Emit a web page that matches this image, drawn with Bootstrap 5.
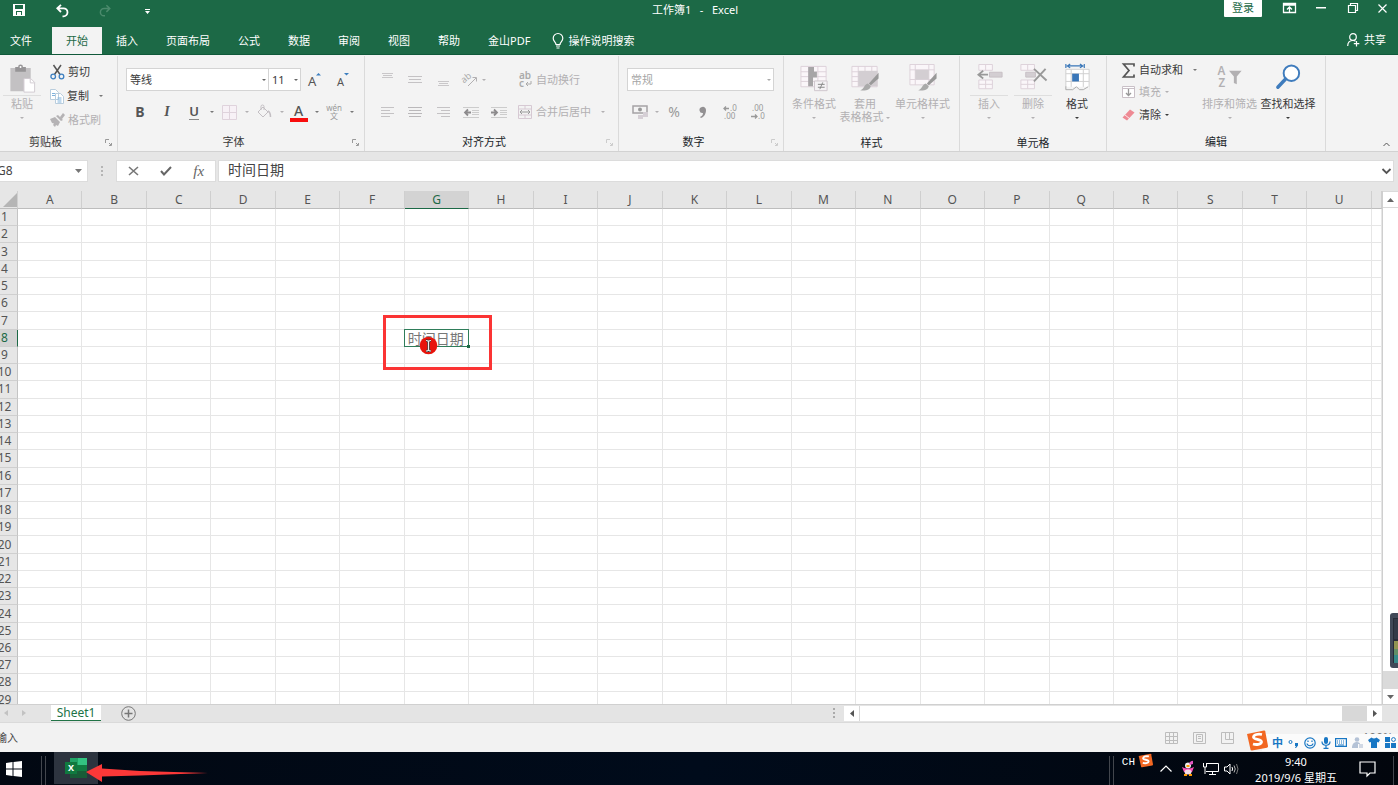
<!DOCTYPE html>
<html lang="zh-CN">
<head>
<meta charset="utf-8">
<meta name="viewport" content="width=device-width, initial-scale=1">
<title>工作簿1 - Excel</title>
<link href="https://cdn.jsdelivr.net/npm/bootstrap@5.3.0/dist/css/bootstrap.min.css" rel="stylesheet">
<script src="https://cdn.jsdelivr.net/npm/bootstrap@5.3.0/dist/js/bootstrap.bundle.min.js"></script>
<style>
:root{--xl:#1c6946;--ink:#3a3a3a;--off:#b2b0b2;--line:#dadada}
body{font-family:"Noto Sans","Noto Sans CJK SC",sans-serif;font-size:11px;line-height:14px;color:var(--ink);background:#e6e6e6}
svg{display:block;flex:none;overflow:visible}
button{font-size:11px;line-height:14px;color:inherit;white-space:nowrap}
.flat{background:none;border:0;padding:0;display:flex;align-items:center;justify-content:center}
.off{color:var(--off)}
.side{flex:1 0 0}
/* title and tabs */
.titlebar{background:var(--xl);color:#fff;height:27px}
.titlebar .flat{height:20px}
.titlebar .caption-text{padding:3px 8px 0 0}
.titlebar .flat.win{height:16px}
.signin{background:#fff;color:var(--xl);height:17px;width:38px;border:0;border-radius:0 0 1px 1px;padding:0 0 2px}
.tabbar{background:var(--xl);height:28px;color:#fff;border-bottom:1px solid #10593a}
.tabbar .nav-link{color:#fff;padding:7px 14px 6px;border-radius:0}
.tabbar .nav-link.active{background:#f3f3f3;color:var(--xl);margin-bottom:-1px}
.tabbar .file-tab{padding-left:10px;padding-right:20px}
.share{margin-right:12px;height:25px}
/* ribbon */
.ribbon{background:#f3f3f3;border-bottom:1px solid #d2d2d2;height:97px}
.rgroup{display:flex;flex-direction:column;border-right:1px solid var(--line);margin-top:1px;flex:none}
.rbody{height:79px}
.rlabel{display:flex;align-items:center;height:18px;text-align:center}
.rlabel span{flex:1}
.rlabel svg{margin-right:5px;margin-left:3px}
.rlabel .far{margin-left:14px}
.w-clip{width:118px}.w-font{width:247px}.w-align{width:254px}.w-num{width:165px}.w-style{width:176px}.w-cell{width:147px}.w-edit{width:219px}
.tool{width:26px;height:24px}
.tool-wide{width:28px;height:24px}
.line1{height:24px;margin-top:12px;display:flex}
.line2{height:24px;margin-top:8px;display:flex;align-items:center}
.car{width:7px;height:24px;color:#777}
.car.off,.off .car{color:var(--off)}
.car::before,.tri{content:"";border:2px solid transparent;border-top-color:currentColor;border-bottom:0;display:block}
.form-select.combo{font-size:11px;line-height:14px;padding:0 10px 0 3px;height:23px;border:1px solid #d4d4d4;border-radius:0;color:var(--ink);background-color:#fff;background-size:4px 2px;background-position:right 2px center;
--bs-form-select-bg-img:url("data:image/svg+xml,%3Csvg xmlns='http://www.w3.org/2000/svg' viewBox='0 0 4 2'%3E%3Cpath d='M0 0h4L2 2z' fill='%23666'/%3E%3C/svg%3E")}
.form-select.combo.off{color:#a5a5a5;--bs-form-select-bg-img:url("data:image/svg+xml,%3Csvg xmlns='http://www.w3.org/2000/svg' viewBox='0 0 4 2'%3E%3Cpath d='M0 0h4L2 2z' fill='%23aaa'/%3E%3C/svg%3E")}
.big{flex-direction:column;justify-content:flex-start;height:70px}
.big svg{height:31px}
.big .cap{border-top:1px solid transparent;padding-top:1px;line-height:13px}
.big .cap.ruled{border-top-color:#dedede;padding-left:8px;padding-right:8px}
.big .tri{margin-top:7px}
.small-cmd{height:24px;justify-content:flex-start;gap:3px}
.small-cmd.tight{height:22px}
.bi-b{font-size:14px;font-weight:700;color:#555}
.bi-i{font:italic bold 14px "Liberation Serif",serif;color:#555}
.bi-u{font:600 13px/15px "Noto Sans",sans-serif;color:#555;border-bottom:1px solid #888}
.pinyin{font-size:8px;line-height:8px;color:#999}
.wrap-ic{margin-left:28px}
.merge-ic{margin-left:5px}
/* formula bar */
.fbar{height:39px;padding-top:8px}
.fbox{height:22px;background:#fff;border:1px solid #dcdcdc}
.fbox input{border:0;outline:0;background:none;padding:0;color:#444}
.fbox .name-in{width:78px;font-size:12px;margin-left:-3px}
.fbox .formula-in{font-size:14px;line-height:18px;padding:0 0 2px 9px}
.fx{font:italic 15px "Liberation Serif",serif;color:#666}
.fmain{margin:0 4px 0 2px}
/* sheet */
.sheet{min-height:0}
.cells-wrap{min-width:0;overflow:hidden;border-right:1px solid #cfcfcf;background:#fff}
.cells{table-layout:fixed;width:100%;height:calc(100% + 5px);border-collapse:separate;border-spacing:0;font-size:12px;line-height:16px}
.cells th,.cells td{padding:0;font-weight:400}
.cells thead th{height:18px;padding-top:1px;background:#e6e6e6;text-align:center;color:#555;border-right:1px solid #cfcfcf;border-bottom:1px solid #bdbdbd}
.cells tbody th{background:#e6e6e6;color:#555;border-right:1px solid #c4c4c4;border-bottom:1px solid #cfcfcf}
.cells tbody th span{display:flex;justify-content:center;width:9px;height:16px}
.cells td{border-right:1px solid #e6e6e6;border-bottom:1px solid #e6e6e6}
.cells thead th.hot{background:#d3d3d3;border-bottom-color:var(--xl);color:var(--xl)}
.cells tbody th.hot{background:#d3d3d3;border-right-color:var(--xl);color:var(--xl)}
.cells td.editing{position:relative;z-index:1}
.corner{width:18px}.stub{width:10px}
.corner svg{margin-left:3px}
.cell-edit{position:absolute;left:-1px;top:-1px;width:calc(100% + 2px);height:calc(100% + 2px);border:1px solid #2f7d5a;border-radius:0;padding:0 0 0 3px;font-size:14px;line-height:16px;color:#777;background:#fff;outline:0}
.fill-dot{position:absolute;right:-2px;bottom:-2px;width:3px;height:3px;background:#1c6946}
.callout-frame{position:absolute;inset:-15px -24px -24px -22px;border:3px solid #fb3434}
.pointer{position:absolute;left:14px;top:6px}
.vscroll{width:15px;background:#dadada}
.sbtn{background:#fff;width:15px;height:15px}
.vscroll .sbtn:first-child{margin:1px 0}
.vthumb{background:#fff;flex:1;margin-bottom:18px}
.meter{position:absolute;right:0;bottom:36px;z-index:2;overflow:hidden}
.sheetbar{height:18px;background:#e4e4e4;border-top:1px solid #d0d0d0}
.sheet-tab{width:50px;height:16px;line-height:15px;background:#fff;color:#217346;border-bottom:1px solid #217346;font-size:12px;text-align:center;text-decoration:none}
.new-tab{margin-left:20px}
.hscroll{width:538px;height:15px;background:#d8d8d8;gap:1px;margin:1px 16px 0 0}
.hthumb{background:#fff;flex:1;margin-right:24px}
.statusbar{height:30px;background:#f2f2f2;border-top:1px solid #dadada;color:#444}
.statusbar .mode{margin-left:-4px}
.view-btn{width:28px}
.zoomtext{font-size:12px;margin:0 5px 0 121px;color:#777}
.ime{position:absolute;right:0;bottom:1px;height:17px;width:136px;background:#fbfbfb;padding-left:10px;padding-right:2px}
.ime-logo{position:absolute;left:-16px;top:-4px}
.ime .zh{color:#1877c4;font-weight:700}
.taskbar{height:33px;background:linear-gradient(90deg,#020812,#000b1b 50%,#02060d)}
.taskbar,.taskbar button{color:#fff}
.bars{width:5px;height:29px;border-left:1px solid #42464d;border-right:1px solid #42464d}
.bars.first{margin-left:14px;margin-right:8px}
.start{width:27px}
.app{width:44px;height:32px;background:#2d343f}
.arrow{position:absolute;left:32px;top:12px}
.clock{width:90px;line-height:16px;text-align:center;margin-left:7px;padding-top:2px}
.ch{font-family:"Liberation Mono",monospace;margin:3px 3px 0 8px}
.tray-s{margin-top:1px}
</style>
</head>
<body class="vh-100 d-flex flex-column overflow-hidden">

<header class="titlebar d-flex align-items-start flex-shrink-0">
  <div class="d-flex side">
    <button class="flat ms-2" style="width:22px" aria-label="保存"><svg width="12" height="12" viewBox="0 0 12 12"><path d="M0 0h12v12H0zM2 1v4h8V1zM3 7v4h1V8h4v3h1V7z" fill="#fff" fill-rule="evenodd"/><path d="M5 9h1.500v2H5z" fill="#fff"/></svg></button>
    <button class="flat" style="width:64px" aria-label="撤消"><svg width="13" height="13" viewBox="0 0 13 13" fill="none" stroke="#fff" stroke-width="1.800"><path d="M5 .8 1.300 4.300 5 8M1.500 4.300h6a4 4 0 0 1 0 8H6.500"/></svg></button>
    <button class="flat" style="width:22px" aria-label="恢复"><svg width="12" height="13" viewBox="0 0 13 13" fill="none" stroke="#4b8a6c" stroke-width="1.600"><path d="m8 .8 3.700 3.500L8 8m3.500-3.700h-6a4 4 0 0 0 0 8h1"/></svg></button>
    <button class="flat" style="width:62px;height:23px" aria-label="自定义快速访问工具栏"><svg width="5" height="5"><path d="M0 0h5v1H0zM0 2h5L2.500 5z" fill="#fff"/></svg></button>
  </div>
  <div class="caption-text">工作簿1&nbsp;&nbsp; -&nbsp;&nbsp; Excel</div>
  <div class="d-flex side justify-content-end">
    <button class="signin me-2">登录</button>
    <button class="flat win" style="width:38px" aria-label="功能区显示选项"><svg width="13" height="10" viewBox="0 0 13 10" fill="none" stroke="#fff"><path d="M.5.5h12v9H.5zM.5 2h12M6.500 9V4M4 6.500 6.500 4 9 6.500" stroke-width="1.300"/></svg></button>
    <button class="flat win" style="width:26px" aria-label="最小化"><svg width="10" height="2"><path d="M0 0h10v1.500H0z" fill="#fff"/></svg></button>
    <button class="flat win" style="width:37px" aria-label="向下还原"><svg width="10" height="10" viewBox="0 0 10 10" fill="none" stroke="#fff" stroke-width="1.200"><path d="M.5 2.500h7v7h-7zM2.500 2.500v-2h7v7h-2"/></svg></button>
    <button class="flat win me-1" style="width:23px" aria-label="关闭"><svg width="9" height="9" viewBox="0 0 9 9" stroke="#fff" stroke-width="1.200"><path d="m.5.5 8 8m0-8-8 8"/></svg></button>
  </div>
</header>

<nav class="tabbar d-flex flex-shrink-0">
  <ul class="nav flex-nowrap">
    <li><a class="nav-link file-tab" href="#">文件</a></li>
    <li><a class="nav-link active" href="#">开始</a></li>
    <li><a class="nav-link" href="#">插入</a></li>
    <li><a class="nav-link" href="#">页面布局</a></li>
    <li><a class="nav-link" href="#">公式</a></li>
    <li><a class="nav-link" href="#">数据</a></li>
    <li><a class="nav-link" href="#">审阅</a></li>
    <li><a class="nav-link" href="#">视图</a></li>
    <li><a class="nav-link" href="#">帮助</a></li>
    <li><a class="nav-link" href="#">金山PDF</a></li>
  </ul>
  <button class="flat ms-2 gap-1"><svg width="12" height="16" viewBox="0 0 12 16" fill="none" stroke="#fff" stroke-width="1.200"><path d="M4 11.500c0-2.500-2.800-3-2.800-6.200a4.800 4.800 0 0 1 9.600 0c0 3.200-2.800 3.700-2.800 6.200zM4 13h4M4.500 15h3"/></svg>操作说明搜索</button>
  <button class="flat share ms-auto gap-1"><svg width="13" height="14" viewBox="0 0 13 14" fill="none" stroke="#fff" stroke-width="1.200"><circle cx="6" cy="4" r="3.300"/><path d="M.7 13c0-3.500 2-5.500 5.300-5.500 1 0 1.800.2 2.500.7M9.500 8v5.500M6.800 10.700h5.500"/></svg>共享</button>
</nav>

<section class="ribbon d-flex flex-shrink-0" aria-label="开始">
  <div class="rgroup w-clip">
    <div class="rbody d-flex">
      <button class="flat big off pt-2" style="width:44px;margin-right:6px">
        <svg width="26" height="32" viewBox="0 0 26 32"><path d="M1 4h21v12h-6v12H1z" fill="#c3c1c3"/><path d="M6 3h3a2.500 2.500 0 0 1 5 0h3v5H6z" fill="#979597"/><circle cx="11.500" cy="3" r="1" fill="#fff"/><path d="M15 15h7l4 4v10H15z" fill="#fff" stroke="#d2cbd2"/><path d="M21.500 15v4.500H26" fill="none" stroke="#d2cbd2"/></svg>
        <span class="cap ruled">粘贴</span><span class="tri"></span></button>
      <div class="d-flex flex-column pt-1">
        <button class="flat small-cmd"><svg width="15" height="16" viewBox="0 0 15 16" fill="none"><path d="m3.500 1 6.500 9.500M11 1 4.500 10.500" stroke="#555" stroke-width="1.500"/><circle cx="3.200" cy="12.500" r="2.300" stroke="#3c7fc0" stroke-width="1.300"/><circle cx="11.500" cy="12.500" r="2.300" stroke="#3c7fc0" stroke-width="1.300"/></svg>剪切</button>
        <div class="d-flex"><button class="flat small-cmd"><svg width="14" height="15" viewBox="0 0 14 15" fill="#fff" stroke="#b9cddd"><path d="M.5.5h5l3 3v7h-8zM5.500 4.500h5l3 3v7h-8z"/><path d="M2 4.500h3M2 6.500h3M7.500 9h4M7.500 11h4M7.500 13h4" stroke="#7fb2dc"/></svg>复制</button><button class="flat car ms-2" aria-label="复制选项"></button></div>
        <button class="flat small-cmd off"><svg width="15" height="14" viewBox="0 0 15 14" fill="#b5b3b5"><path d="m10 4 3-4 2 2-3 4zM8 2l5 5-2 1-5-5zM0 6l5-2 5 5-2 4-2-1-1 2-2-2 1-1.500L2 10z"/></svg>格式刷</button>
      </div>
    </div>
    <div class="rlabel"><span>剪贴板</span><svg class="far" width="7" height="7" viewBox="0 0 7 7" stroke="#999" fill="none"><path d="M.5 4V.5H4M4 6.500h2.500V4M4 4l2 2"/></svg></div>
  </div>

  <div class="rgroup w-font">
    <div class="rbody">
      <div class="line1 ps-2">
        <select class="form-select combo" style="width:143px" aria-label="字体"><option>等线</option></select>
        <select class="form-select combo border-start-0" style="width:32px" aria-label="字号"><option>11</option></select>
        <button class="flat tool-wide" aria-label="增大字号"><svg width="14" height="17" viewBox="0 0 14 17"><text x="0" y="14" font-size="13" fill="#555">A</text><path d="M8 3.500h5L10.500 1z" fill="#3c7fc0"/></svg></button>
        <button class="flat tool-wide" aria-label="减小字号"><svg width="14" height="17" viewBox="0 0 14 17"><text x="1" y="14" font-size="11" fill="#555">A</text><path d="M8 1h5l-2.500 2.500z" fill="#3c7fc0"/></svg></button>
      </div>
      <div class="line2" style="gap:1px;padding-left:9px">
        <button class="flat tool bi-b" aria-label="加粗">B</button>
        <button class="flat tool bi-i" aria-label="倾斜">I</button>
        <button class="flat tool" aria-label="下划线"><span class="bi-u">U</span></button>
        <button class="flat car" aria-label="下划线选项"></button>
        <button class="flat tool" aria-label="边框"><svg width="15" height="15" viewBox="0 0 15 15" fill="#f7f1f6" stroke="#dfd3dc"><path d="M.5.5h14v14H.5zM7.500.5v14M.5 7.500h14"/></svg></button>
        <button class="flat car off" aria-label="边框选项"></button>
        <button class="flat tool" aria-label="填充颜色"><svg width="15" height="14" viewBox="0 0 15 14" fill="none" stroke="#c3bfc3"><path d="m6 2 5 5-5 5-5-5zM4 5V1.500a1.500 1.500 0 0 1 3 0V5"/><path d="M11 6c2 1 2.500 3 2.500 6" stroke-width="1.500"/></svg></button>
        <button class="flat car off" aria-label="填充选项"></button>
        <button class="flat tool" aria-label="字体颜色"><svg width="18" height="18" viewBox="0 0 18 18"><text x="4" y="13" font-size="14" font-weight="500" fill="#555">A</text><path d="M0 15h18v4H0z" fill="#f80d0d"/></svg></button>
        <button class="flat car" aria-label="字体颜色选项"></button>
        <button class="flat tool pinyin flex-column" aria-label="拼音"><span>wén</span><span>文</span></button>
        <button class="flat car" aria-label="拼音选项"></button>
      </div>
    </div>
    <div class="rlabel"><span>字体</span><svg width="7" height="7" viewBox="0 0 7 7" stroke="#999" fill="none"><path d="M.5 4V.5H4M4 6.500h2.500V4M4 4l2 2"/></svg></div>
  </div>

  <div class="rgroup w-align off">
    <div class="rbody ps-2">
      <div class="line1">
        <button class="flat tool-wide" aria-label="顶端对齐"><svg width="13" height="14" stroke="#c9c7c9"><path d="M1 .5h11M2 2.500h9M1 4.500h11"/></svg></button>
        <button class="flat tool-wide" aria-label="垂直居中"><svg width="14" height="14" stroke="#c4c2c4"><path d="M0 3.500h14M1 6.500h12M0 9.500h14"/></svg></button>
        <button class="flat tool-wide" aria-label="底端对齐"><svg width="13" height="14" stroke="#c9c7c9"><path d="M1 8.500h11M2 10.500h9M1 12.500h11"/></svg></button>
        <button class="flat" style="width:34px" aria-label="方向"><svg width="16" height="14" viewBox="0 0 16 14" fill="none" stroke="#b2b0b2"><path d="M6 13 14 5M10.500 4.500h4v4"/><text x="0" y="9" font-size="9" stroke="none" fill="#aaa" transform="rotate(-38 3 7)">ab</text></svg><span class="tri ms-1"></span></button>
        <button class="flat gap-1 wrap-ic"><svg width="13" height="16" viewBox="0 0 13 16"><g font-size="10" font-weight="600" fill="#aaa"><text x="0" y="7">ab</text><text x="0" y="15">c</text></g><path d="M12 9v3H7m2-2-2 2 2 2" fill="none" stroke="#aaa"/></svg>自动换行</button>
      </div>
      <div class="line2">
        <button class="flat tool-wide" aria-label="左对齐"><svg width="13" height="10" stroke="#c4c2c4"><path d="M0 .5h13M0 3.500h9M0 6.500h13M0 9.500h9"/></svg></button>
        <button class="flat tool-wide" aria-label="居中"><svg width="14" height="10" stroke="#bab8ba"><path d="M0 .5h14M1 3.500h12M0 6.500h14M1 9.500h12"/></svg></button>
        <button class="flat tool-wide" aria-label="右对齐"><svg width="13" height="10" stroke="#c4c2c4"><path d="M0 .5h13M4 3.500h9M0 6.500h13M4 9.500h9"/></svg></button>
        <button class="flat tool-wide" aria-label="减少缩进"><svg width="16" height="11" fill="none"><path d="M0 .5h16M9 3.500h7M9 5.500h7M9 7.500h7M0 10.500h16" stroke="#ccc"/><path d="M8 5.500H2m3-3-3 3 3 3" stroke="#8d8b8d" stroke-width="1.800"/></svg></button>
        <button class="flat tool-wide" aria-label="增加缩进"><svg width="16" height="11" fill="none"><path d="M0 .5h16M9 3.500h7M9 5.500h7M9 7.500h7M0 10.500h16" stroke="#ccc"/><path d="M0 5.500h6m-3-3 3 3-3 3" stroke="#8d8b8d" stroke-width="1.800"/></svg></button>
        <button class="flat gap-1 merge-ic"><svg width="14" height="14" viewBox="0 0 14 14" fill="none" stroke="#d6c9d3"><path d="M.5.5h13v13H.5zM.5 4h13M.5 10h13M7 .5V4M7 10v3.500"/><path d="M2 7h10M4 5 2 7l2 2M10 5l2 2-2 2" stroke="#999"/></svg>合并后居中</button>
        <button class="flat car ms-2" aria-label="合并选项"></button>
      </div>
    </div>
    <div class="rlabel"><span class="text-dark">对齐方式</span><svg width="7" height="7" viewBox="0 0 7 7" stroke="#ccc" fill="none"><path d="M.5 4V.5H4M4 6.500h2.500V4M4 4l2 2"/></svg></div>
  </div>

  <div class="rgroup w-num off">
    <div class="rbody ps-2">
      <div class="line1"><select class="form-select combo off" style="width:147px" aria-label="数字格式"><option>常规</option></select></div>
      <div class="line2">
        <button class="flat tool" aria-label="会计数字格式"><svg width="16" height="15" viewBox="0 0 16 15"><path d="M1 1h14v7H1z" fill="none" stroke="#a5a3a5" stroke-width="1.500"/><circle cx="8" cy="4.500" r="2" fill="#999"/><path d="M6 10h5v4H6zM11 7h5v5h-5z" fill="#d5cfd5"/></svg></button>
        <button class="flat car" aria-label="会计选项"></button>
        <button class="flat tool-wide" style="font-size:14px;color:#999" aria-label="百分比">%</button>
        <button class="flat tool-wide" aria-label="千位分隔"><svg width="7" height="11"><path d="M3 0a3 3 0 0 1 4 3c0 4-2 7-5 8l-1-1c2-1 3-2 3-4a3 3 0 0 1-1-6" fill="#929092"/></svg></button>
        <button class="flat tool-wide" aria-label="增加小数位"><svg width="14" height="15" viewBox="0 0 14 15"><g font-size="8" fill="#999"><text x="7" y="6">.0</text><text x="1" y="14">.00</text></g><path d="M6 3.500H1m2-2-2 2 2 2" stroke="#999" fill="none" stroke-width="1.300"/></svg></button>
        <button class="flat tool-wide" aria-label="减少小数位"><svg width="14" height="15" viewBox="0 0 14 15"><g font-size="8" fill="#999"><text x="1" y="6">.00</text><text x="7" y="14">.0</text></g><path d="M0 11.500h6m-2-2 2 2-2 2" stroke="#999" fill="none" stroke-width="1.300"/></svg></button>
      </div>
    </div>
    <div class="rlabel"><span class="text-dark">数字</span><svg width="7" height="7" viewBox="0 0 7 7" stroke="#ccc" fill="none"><path d="M.5 4V.5H4M4 6.500h2.500V4M4 4l2 2"/></svg></div>
  </div>

  <div class="rgroup w-style off">
    <div class="rbody d-flex justify-content-center pt-2">
      <button class="flat big" style="width:47px"><svg width="28" height="32" viewBox="0 0 28 32"><path d="M.5 2.500h26v21H.5zM9 2.500v21M18 2.500v21M.5 8h26M.5 13h26M.5 18h26" fill="#faf6f9" stroke="#ddd2da"/><path d="M8 3h6v5h3v6h-4v9H8z" fill="#a7a5a7"/><path d="M14.500 17.500h13v10h-13z" fill="#f5f2f5" stroke="#cfc6cd"/><path d="M18 21h7M18 24h7M23 19l-3 7" stroke="#888"/></svg><span class="cap">条件格式</span><span class="tri"></span></button>
      <button class="flat big" style="width:55px"><svg width="28" height="32" viewBox="0 0 28 32"><path d="M.5 2.500h26v21H.5zM7 2.500v21M14 2.500v21M21 2.500v21M.5 8h26M.5 13h26M.5 18h26" fill="#faf6f9" stroke="#ddd2da"/><path d="M7 7h20v16H7z" fill="#d3ced2"/><path d="M28 9v6l-8 7-2-2z" fill="#999"/><path d="m17 20 3 3c-1 4-6 5-11 4 4-1 4-6 8-7" fill="#aaa"/></svg><span class="cap">套用<br>表格格式 <span class="d-inline-block tri m-0 align-middle"></span></span></button>
      <button class="flat big" style="width:60px"><svg width="28" height="32" viewBox="0 0 28 32"><path d="M.5.5h25v21H.5zM6 .5v21M20 .5v21M.5 6h25M.5 16h25" fill="#faf6f9" stroke="#ddd2da"/><path d="M6 6h14v10H6z" fill="#d3ced2"/><path d="M28 9v6l-8 7-2-2z" fill="#999"/><path d="m17 20 3 3c-1 4-6 5-11 4 4-1 4-6 8-7" fill="#aaa"/></svg><span class="cap">单元格样式</span><span class="tri"></span></button>
    </div>
    <div class="rlabel"><span class="text-dark">样式</span></div>
  </div>

  <div class="rgroup w-cell">
    <div class="rbody d-flex justify-content-center pt-2">
      <button class="flat big off" style="width:44px"><svg width="27" height="32" viewBox="0 0 27 32"><path d="M2.500.5h14v6h-14zM9.500.5v6M2.500 16.500h14v9h-14zM9.500 16.500v9M2.500 21h14" fill="#faf6f9" stroke="#ddd2da"/><path d="M13.500 8.500h13v5h-13z" fill="#d3ced2" stroke="#c7c0c5"/><path d="M12 11H2m5-4-5 4 5 4" fill="none" stroke="#999" stroke-width="1.800"/></svg><span class="cap ruled">插入</span><span class="tri"></span></button>
      <button class="flat big off" style="width:44px"><svg width="28" height="32" viewBox="0 0 28 32"><path d="M1.500.5h14v6h-14zM8.500.5v6M1.500 16.500h14v9h-14zM8.500 16.500v9M1.500 21h14" fill="#faf6f9" stroke="#ddd2da"/><path d="M6.500 8.500h10v5h-10z" fill="#d3ced2" stroke="#c7c0c5"/><path d="m15 5 13 12M27 5 15 18" fill="none" stroke="#999" stroke-width="2"/></svg><span class="cap ruled">删除</span><span class="tri"></span></button>
      <button class="flat big" style="width:44px"><svg width="26" height="32" viewBox="0 0 26 32"><path d="M1.500 5.500h24v21h-24zM7 5.500v20M19.500 5.500v20M1.500 10h24M1.500 18h24" fill="#fff" stroke="#cfcfcf"/><path d="M1 23.500h25V28H1z" fill="#f3f3f3"/><path d="M1.500 23v3.500h7l4-3 3 3h4l5-3" fill="none" stroke="#aaa"/><path d="M8 10h7v8H8z" fill="#3976b8"/><path d="M1.500 0v4M20.500 0v4M3 2h16M6 0 3 2l3 2M16 0l3 2-3 2" fill="none" stroke="#3976b8" stroke-width="1.200"/></svg><span class="cap">格式</span><span class="tri"></span></button>
    </div>
    <div class="rlabel"><span class="text-dark">单元格</span></div>
  </div>

  <div class="rgroup w-edit">
    <div class="rbody d-flex">
      <div class="d-flex flex-column" style="padding:3px 0 0 15px;width:93px">
        <div class="d-flex"><button class="flat small-cmd tight gap-1"><svg width="13" height="15" viewBox="0 0 13 15"><path d="M12 3.500V1H1.500L7 7.500 1.500 14H12v-2.500" fill="none" stroke="#555" stroke-width="1.700"/></svg>自动求和</button><button class="flat car ms-2" style="height:22px" aria-label="求和选项"></button></div>
        <button class="flat small-cmd tight gap-1 off"><svg width="13" height="12" viewBox="0 0 13 12"><path d="M.5.5h12v11H.5z" fill="#fff" stroke="#c9c0c7"/><path d="M.5 2.500h12" stroke="#c9c0c7"/><path d="M6.500 3v6.500M4 7l2.500 2.500L9 7" fill="none" stroke="#999" stroke-width="1.300"/></svg>填充<span class="tri"></span></button>
        <button class="flat small-cmd gap-1"><svg width="13" height="12" viewBox="0 0 13 12"><path d="m8 .500 4.500 3L5 11.500.5 8.500z" fill="#ee8a94"/><path d="m3 6 4.500 3.500" stroke="#fff" stroke-width=".8"/></svg>清除<span class="tri"></span></button>
      </div>
      <button class="flat big off pt-2" style="width:59px"><svg width="26" height="32" viewBox="0 0 26 32"><g font-size="12" font-weight="600" fill="#b2b0b2"><text x="0" y="11">A</text><text x="1" y="24">Z</text></g><path d="M12 7h13l-5 6v8l-3-1.500V13z" fill="#b2b0b2"/></svg><span class="cap">排序和筛选</span><span class="tri"></span></button>
      <button class="flat big pt-2" style="width:58px"><svg width="26" height="32" viewBox="0 0 26 32" fill="none" stroke="#3f7cbd"><circle cx="16.500" cy="9.500" r="8" fill="#fff" stroke-width="2"/><path d="m10.500 15.500-8 8.500" stroke-width="3.500" stroke-linecap="round"/></svg><span class="cap">查找和选择</span><span class="tri"></span></button>
    </div>
    <div class="rlabel"><span class="text-dark">编辑</span></div>
  </div>
  <button class="flat ms-auto align-self-end me-2 pb-1" aria-label="折叠功能区"><svg width="7" height="5" fill="none" stroke="#555"><path d="m.5 4 3-3 3 3"/></svg></button>
</section>

<div class="fbar d-flex flex-shrink-0">
  <div class="fbox d-flex align-items-center border-start-0" style="width:88px"><input class="name-in" value="G8" aria-label="名称框"><button class="flat" aria-label="名称列表"><svg width="7" height="4"><path d="M0 0h7L3.500 4z" fill="#777"/></svg></button></div>
  <svg class="mx-2 mt-1" width="12" height="14" fill="#b5b5b5"><path d="M5 2h2v2H5zM5 6h2v2H5zM5 10h2v2H5z"/></svg>
  <div class="fbox d-flex" style="width:100px">
    <button class="flat w-100" aria-label="取消"><svg width="11" height="10" stroke="#777" stroke-width="1.600"><path d="m1 1 9 8M10 1 1 9"/></svg></button>
    <button class="flat w-100" aria-label="输入"><svg width="12" height="10" fill="none" stroke="#666" stroke-width="2"><path d="m1 5 3 3.500L11 1"/></svg></button>
    <button class="flat w-100 fx" aria-label="插入函数">fx</button>
  </div>
  <div class="fbox fmain d-flex align-items-center flex-grow-1"><input class="formula-in flex-grow-1" value="时间日期" aria-label="编辑栏"><button class="flat" style="width:14px" aria-label="展开编辑栏"><svg width="9" height="6" fill="none" stroke="#555" stroke-width="1.800"><path d="m.5 1 4 4 4-4"/></svg></button></div>
</div>

<main class="sheet d-flex flex-grow-1 position-relative">
  <div class="cells-wrap flex-grow-1">
    <table class="cells"><thead><tr id="letters"><th class="corner"><svg width="14" height="14"><path d="M14 0v14H0z" fill="#b5b5b5"/></svg></th></tr></thead><tbody id="rows"></tbody></table>
  </div>
  <div class="vscroll d-flex flex-column">
    <button class="flat sbtn" aria-label="向上滚动"><svg width="7" height="4"><path d="M0 4h7L3.500 0z" fill="#666"/></svg></button>
    <div class="vthumb"></div>
    <button class="flat sbtn" aria-label="向下滚动"><svg width="7" height="4"><path d="M0 0h7L3.500 4z" fill="#666"/></svg></button>
  </div>
  <svg class="meter" width="8" height="55" viewBox="0 0 8 55"><rect width="14" height="55" rx="3" fill="#414958"/><rect x="3" y="5" width="6" height="45" fill="#272c38"/><path d="M4 7h4M4 9h4M4 11h4M4 13h4M4 15h4M4 17h4M4 19h4M4 21h4M4 23h4M4 25h4" stroke="#414958"/><path d="M4 29h4M4 31h4M4 33h4M4 35h4" stroke="#b5b65a" stroke-width="1.500"/><path d="M4 37h4M4 39h4M4 41h4" stroke="#76ae75" stroke-width="1.500"/><path d="M4 43h4M4 45h4M4 47h4M4 49h4" stroke="#3da9a4" stroke-width="1.500"/></svg>
</main>

<div class="sheetbar d-flex flex-shrink-0">
  <svg width="51" height="16" fill="#c2c2c2"><path d="M8 5v6L4 8zM22 5v6l4-3z"/></svg>
  <a class="sheet-tab" href="#">Sheet1</a>
  <button class="flat new-tab" aria-label="新工作表"><svg width="15" height="15" fill="none" stroke="#777"><circle cx="7.500" cy="7.500" r="6.800"/><path d="M7.500 3.500v8M3.500 7.500h8" stroke-width="1.500"/></svg></button>
  <svg class="ms-auto me-2" width="4" height="14" fill="#aaa"><path d="M1 3h2v2H1zM1 7h2v2H1zM1 11h2v2H1z"/></svg>
  <div class="hscroll d-flex">
    <button class="flat sbtn" aria-label="向左滚动"><svg width="4" height="7"><path d="M4 0v7L0 3.500z" fill="#555"/></svg></button>
    <div class="hthumb"></div>
    <button class="flat sbtn" aria-label="向右滚动"><svg width="4" height="7"><path d="M0 0v7l4-3.500z" fill="#555"/></svg></button>
  </div>
</div>

<footer class="statusbar d-flex align-items-center flex-shrink-0 position-relative">
  <span class="mode">输入</span>
  <button class="flat view-btn ms-auto" aria-label="普通"><svg width="13" height="12" fill="none" stroke="#bdbdbd"><path d="M.5.5h12v11H.5zM4.500.5v11M8.500.5v11M.5 4.500h12M.5 8.500h12"/></svg></button>
  <button class="flat view-btn" aria-label="页面布局"><svg width="13" height="12" fill="none" stroke="#bdbdbd"><path d="M.5.5h12v11H.5zM3.500 2.500h6v7h-6zM5 4.500h3M5 6.500h3"/></svg></button>
  <button class="flat view-btn" aria-label="分页预览"><svg width="13" height="12" fill="none" stroke="#bdbdbd"><path d="M.5.5h12v11H.5zM4.500.5v7h8M8.500.5v7"/></svg></button>
  <span class="zoomtext">100%</span>
  <div class="ime d-flex align-items-center justify-content-between">
    <svg class="ime-logo" width="22" height="21" viewBox="0 0 22 21"><path d="m1 4 17-3.500q1-.2 1.300 1L22 16q.2 1.400-1 1.700L6 20.500q-1.200.2-1.500-1z" fill="#f26722"/><path d="M16 4.500c-4-.8-8 0-8.500 2.500-.4 2.800 8.500 2 8 5-.5 2.500-5 3-8.500 2" fill="none" stroke="#fff" stroke-width="2.800"/></svg>
    <span class="zh">中</span>
    <svg width="11" height="12" viewBox="0 0 11 12"><circle cx="2.500" cy="5" r="1.500" fill="none" stroke="#1877c4"/><path d="M7 6h3v2.500L8 11H7l1-2H7z" fill="#1877c4"/></svg>
    <svg width="12" height="12" viewBox="0 0 12 12" fill="none" stroke="#1877c4" stroke-width="1.200"><circle cx="6" cy="6" r="5.200"/><path d="M3 6.500c.5 3 5.500 3 6 0M4 3.500v1.500M8 3.500v1.500"/></svg>
    <svg width="10" height="12" viewBox="0 0 10 12"><rect x="3" width="4" height="7" rx="2" fill="#1877c4"/><path d="M1 4.500c0 5 8 5 8 0M5 8v3.500M2.500 11.400h5" fill="none" stroke="#1877c4" stroke-width="1.200"/></svg>
    <svg width="12" height="9" viewBox="0 0 12 9" fill="none" stroke="#1877c4"><path d="M.6.6h10.800v7.800H.6z" stroke-width="1.200"/><path d="M2 3h8M2 5h8" stroke-dasharray="1 1"/><path d="M3 7h6"/></svg>
    <svg width="11" height="11" viewBox="0 0 11 11" fill="#b4c2d6"><circle cx="5" cy="2.500" r="2.300"/><path d="M0 11c0-4 2-6 5-6 2 0 3 1 3 2H6v4z"/><path d="M7 7h4v4H7z" opacity=".6"/></svg>
    <svg width="12" height="11" viewBox="0 0 12 11"><path d="M3.500.500q2.500 2 5 0L12 3l-1.500 2.500L9 5v6H3V5l-1.500.5L0 3z" fill="#1877c4"/></svg>
    <svg width="11" height="11" viewBox="0 0 11 11" fill="#1877c4"><path d="M0 0h5v5H0zM0 6h5v5H0zM6 6h5v5H6z"/><circle cx="8.500" cy="2.500" r="1.900" fill="none" stroke="#1877c4"/></svg>
  </div>
</footer>

<div class="taskbar d-flex align-items-start flex-shrink-0">
  <button class="flat start align-self-center" aria-label="开始菜单"><svg width="16" height="16" viewBox="0 0 16 16" fill="#fff"><path d="m0 2 6.500-1v6.500H0zM7.500.900 16 0v7.500H7.500zM0 8.500h6.500V15L0 14zM7.500 8.500H16V16l-8.500-1z"/></svg></button>
  <div class="bars first mt-1"></div>
  <div class="position-relative">
    <button class="flat app" aria-label="Excel"><svg width="22" height="20" viewBox="0 0 22 20"><path d="M5 0h17v20H5z" fill="#185c37"/><path d="M13 0h9v7h-9z" fill="#33c481"/><path d="M5 0h8v7H5z" fill="#21a366"/><path d="M13 7h9v6h-9zM5 7h8v6H5z" fill="#107c41"/><path d="M0 4h12v12H0z" fill="#10793f"/><text x="3" y="13" font-size="9" font-weight="700" fill="#fff">X</text></svg></button>
    <svg class="arrow" width="122" height="18" viewBox="0 0 122 18"><path d="m0 8 16-8v4.500l38 2.500 68 2-68 2.500L16 12.500V18z" fill="#fb3838"/></svg>
  </div>
  <div class="bars mt-1 ms-auto"></div>
  <span class="ch">CH</span>
  <svg class="tray-s" width="15" height="15" viewBox="0 0 22 21"><path d="m1 4 17-3.500q1-.2 1.300 1L22 16q.2 1.400-1 1.700L6 20.500q-1.200.2-1.500-1z" fill="#f26722"/><path d="M16 4.500c-4-.8-8 0-8.500 2.500-.4 2.800 8.500 2 8 5-.5 2.500-5 3-8.500 2" fill="none" stroke="#fff" stroke-width="2.800"/></svg>
  <button class="flat h-100 ms-1" style="width:18px" aria-label="显示隐藏的图标"><svg width="12" height="7" fill="none" stroke="#fff" stroke-width="1.200"><path d="m.5 6.500 5.500-5.500 5.500 5.500"/></svg></button>
  <button class="flat h-100" style="width:26px" aria-label="QQ"><svg width="12" height="15" viewBox="0 0 12 15"><circle cx="6" cy="4.500" r="3" fill="#eee"/><path d="M4.500 4h3v2h-3z" fill="#f90"/><path d="M7 2q3-3 4-2v3L8 4z" fill="#e255c0"/><path d="M0 6q6 3 12 0l-2 5H2z" fill="#ff50bb"/><ellipse cx="6" cy="11" rx="3.500" ry="2.500" fill="#f4dce8"/><path d="M2 13h3v2H2zM7 13h3v2H7z" fill="#f90"/></svg></button>
  <button class="flat h-100" style="width:19px" aria-label="网络"><svg width="16" height="14" viewBox="0 0 16 14" fill="none" stroke="#fff"><path d="M4 1.500h11.500v8H3M9.500 9.500v3M6 12.500h7"/><path d="M.5 1v4h3V1M2 5v7"/></svg></button>
  <button class="flat h-100" style="width:24px" aria-label="音量"><svg width="16" height="12" viewBox="0 0 16 12" fill="none" stroke="#fff"><path d="M.5 4h2.500l3-3v10l-3-3H.5zM8 4q1.200 2 0 4"/><path d="M10 2.500q2.500 3.500 0 7" stroke="#bbb"/><path d="M12.500 1q3 5 0 10" stroke="#777"/></svg></button>
  <div class="clock">9:40<br>2019/9/6 星期五</div>
  <button class="flat h-100" style="width:52px" aria-label="通知"><svg width="17" height="16" fill="none" stroke="#fff" stroke-width="1.200"><path d="M1 1h15v11h-5l-3 3v-3H1z"/></svg></button>
  <div class="bars mt-1 border-end-0"></div>
</div>

<script>
const letters = document.getElementById('letters');
const rows = document.getElementById('rows');
const names = 'ABCDEFGHIJKLMNOPQRSTU'.split('');
letters.insertAdjacentHTML('beforeend', names.map(n => `<th class="${n === 'G' ? 'hot' : ''}">${n}</th>`).join('') + '<th class="stub"></th>');
const editor = '<input class="cell-edit" value="时间日期" aria-label="G8"><div class="fill-dot"></div><div class="callout-frame"></div>' +
  '<svg class="pointer" width="19" height="19" viewBox="0 0 19 19"><circle cx="9.500" cy="9.500" r="8.800" fill="#e8140c"/><path d="M7 4.500q2.500 0 2.500 1.500Q9.500 4.500 12 4.500M9.500 5.500v9M7 15q2.500 0 2.500-1.500Q9.500 15 12 15" fill="none" stroke="#333" stroke-width="2.600"/><path d="M7 4.500q2.500 0 2.500 1.500Q9.500 4.500 12 4.500M9.500 5.500v9M7 15q2.500 0 2.500-1.500Q9.500 15 12 15" fill="none" stroke="#eee" stroke-width="1.200"/></svg>';
for (let r = 1; r <= 29; r++) {
  rows.insertAdjacentHTML('beforeend', `<tr><th class="${r === 8 ? 'hot' : ''}"><span>${r}</span></th>` +
    names.map(n => r === 8 && n === 'G' ? `<td class="editing">${editor}</td>` : '<td></td>').join('') + '<td></td></tr>');
}
</script>
</body>
</html>
